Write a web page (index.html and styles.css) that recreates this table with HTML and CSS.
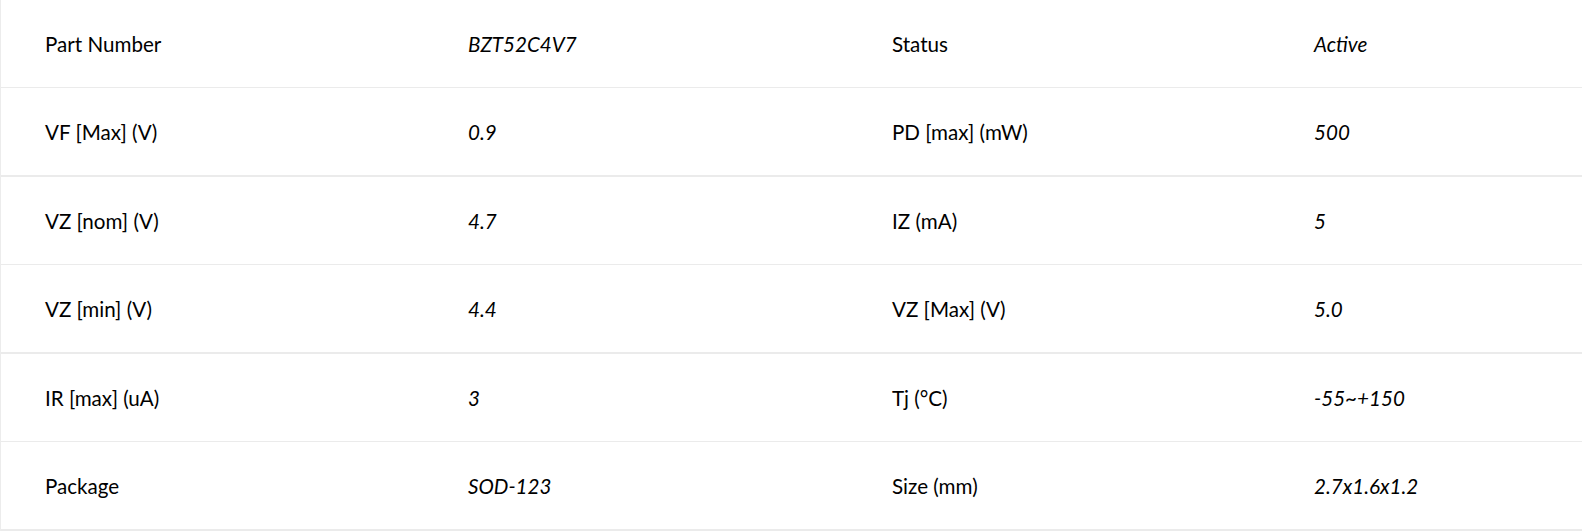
FILE: index.html
```html
<!DOCTYPE html>
<html>
<head>
<meta charset="utf-8">
<link rel="stylesheet" href="styles.css">
</head>
<body>
<div class="spec-table">
  <div class="row">
    <div class="cell label">Part Number</div><div class="cell value">BZT52C4V7</div>
    <div class="cell label">Status</div><div class="cell value">Active</div>
  </div>
  <div class="row">
    <div class="cell label">VF [Max] (V)</div><div class="cell value">0.9</div>
    <div class="cell label">PD [max] (mW)</div><div class="cell value">500</div>
  </div>
  <div class="row">
    <div class="cell label">VZ [nom] (V)</div><div class="cell value">4.7</div>
    <div class="cell label">IZ (mA)</div><div class="cell value">5</div>
  </div>
  <div class="row">
    <div class="cell label">VZ [min] (V)</div><div class="cell value">4.4</div>
    <div class="cell label">VZ [Max] (V)</div><div class="cell value">5.0</div>
  </div>
  <div class="row">
    <div class="cell label">IR [max] (uA)</div><div class="cell value">3</div>
    <div class="cell label">Tj (°C)</div><div class="cell value">-55~+150</div>
  </div>
  <div class="row">
    <div class="cell label">Package</div><div class="cell value">SOD-123</div>
    <div class="cell label">Size (mm)</div><div class="cell value">2.7x1.6x1.2</div>
  </div>
</div>
</body>
</html>
```
FILE: styles.css
```css
html, body {
  margin: 0;
  padding: 0;
  background: #fff;
}
.spec-table {
  border-left: 1px solid #ececec;
  font-family: Lato, "Liberation Sans", sans-serif;
  font-size: 20.6px;
  color: #000;
}
.row {
  display: grid;
  grid-template-columns: 423px 424px 422px 1fr;
  height: 87px;
  border-bottom: 1px solid #ebebeb;
}
.row:nth-child(even) {
  border-bottom-width: 2px;
}
.cell {
  display: flex;
  align-items: center;
  padding-left: 44px;
}
.value {
  font-style: italic;
}
```
